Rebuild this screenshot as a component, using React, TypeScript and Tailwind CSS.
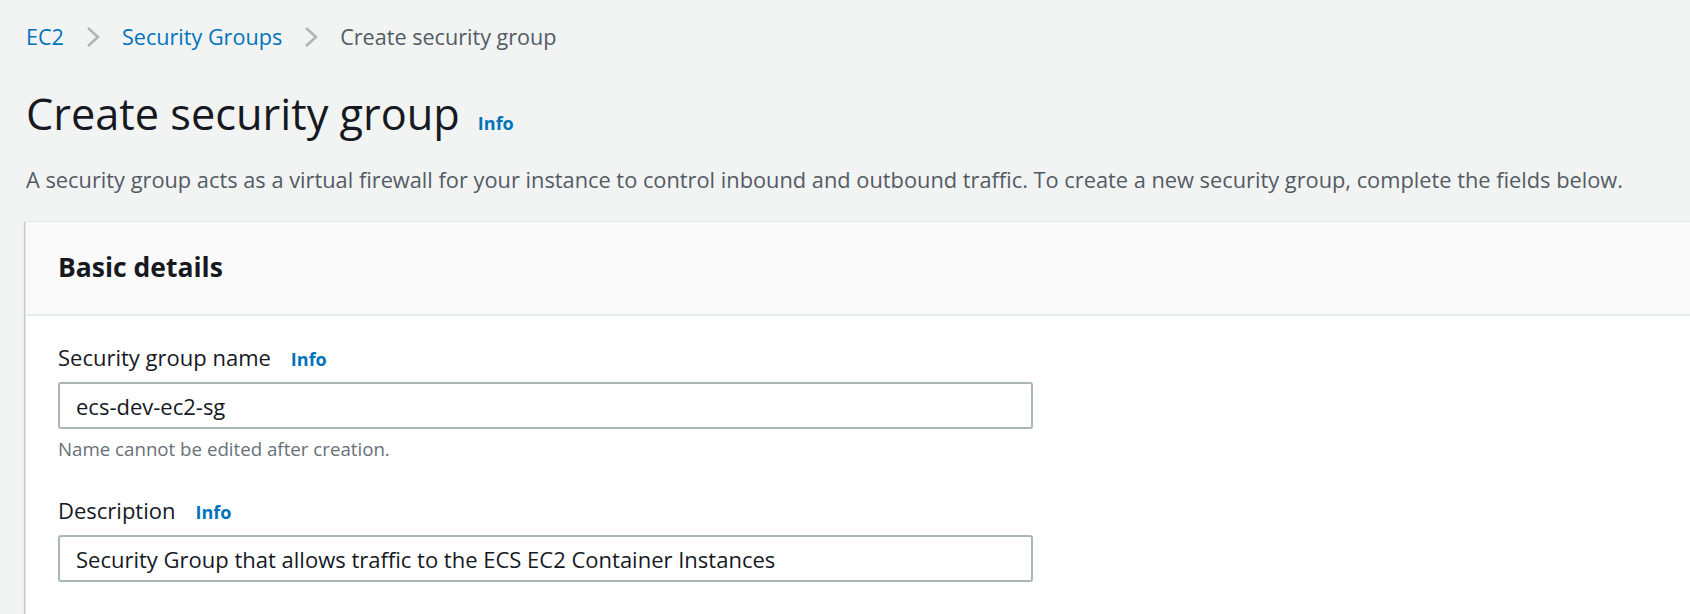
import React from 'react'

const font = { fontFamily: '"Open Sans", "Noto Sans", Arial, sans-serif' }

function Chevron() {
  return (
    <svg width="16" height="24" viewBox="0 0 16 24" className="shrink-0" aria-hidden="true">
      <polyline points="3,3 13,12 3,21" fill="none" stroke="#aab7b8" strokeWidth="2.5" />
    </svg>
  )
}

function InfoLink({ className = '' }: { className?: string }) {
  return <a className={`text-[18px] font-bold text-[#0073bb] ${className}`}>Info</a>
}

function Field({
  label,
  value,
  help,
  className = '',
}: {
  label: string
  value: string
  help?: string
  className?: string
}) {
  return (
    <div className={className}>
      <div className="flex items-baseline gap-[20px] text-[22px] leading-[30px] text-[#16191f]">
        <span>{label}</span>
        <InfoLink />
      </div>
      <input
        type="text"
        readOnly
        value={value}
        className="mt-[8px] block h-[47px] w-[975px] rounded-[3px] border-2 border-[#aab7b8] bg-white px-[16px] text-[22px] text-[#16191f] outline-none"
        style={font}
      />
      {help ? <p className="mt-[7px] text-[18.7px] leading-[26px] text-[#687078]">{help}</p> : null}
    </div>
  )
}

export default function App() {
  return (
    <div className="min-h-screen overflow-hidden bg-[#f2f3f3] pl-[26px]" style={font}>
      <nav className="flex items-center pt-[22px] text-[21.6px] leading-[30px]">
        <a className="text-[#0073bb]">EC2</a>
        <span className="mx-[21px] flex"><Chevron /></span>
        <a className="text-[#0073bb]">Security Groups</a>
        <span className="mx-[21px] flex"><Chevron /></span>
        <span className="text-[#545b64]">Create security group</span>
      </nav>

      <div className="mt-[41px] flex items-baseline gap-[18px]">
        <h1 className="text-[43.3px] leading-[42px] font-normal text-[#16191f]">Create security group</h1>
        <InfoLink />
      </div>

      <p className="mt-[29px] text-[21.8px] leading-[28px] text-[#545b64]">
        A security group acts as a virtual firewall for your instance to control inbound and outbound traffic. To
        create a new security group, complete the fields below.
      </p>

      <section className="-mr-[60px] mt-[27px] ml-[-1px] border border-[#e3e7e8] bg-white shadow-[0_1px_1px_0_rgba(0,28,36,0.3),-1px_1px_1px_0_rgba(0,28,36,0.15)]">
        <header className="border-b-2 border-[#eaeded] bg-[#fafafa] pt-[28px] pb-[30px] pl-[32px]">
          <h2 className="text-[26.5px] leading-[34px] font-bold text-[#16191f]">Basic details</h2>
        </header>
        <div className="pt-[26px] pb-[40px] pl-[32px]">
          <Field label="Security group name" value="ecs-dev-ec2-sg" help="Name cannot be edited after creation." />
          <Field
            className="mt-[33px]"
            label="Description"
            value="Security Group that allows traffic to the ECS EC2 Container Instances"
          />
        </div>
      </section>
    </div>
  )
}
